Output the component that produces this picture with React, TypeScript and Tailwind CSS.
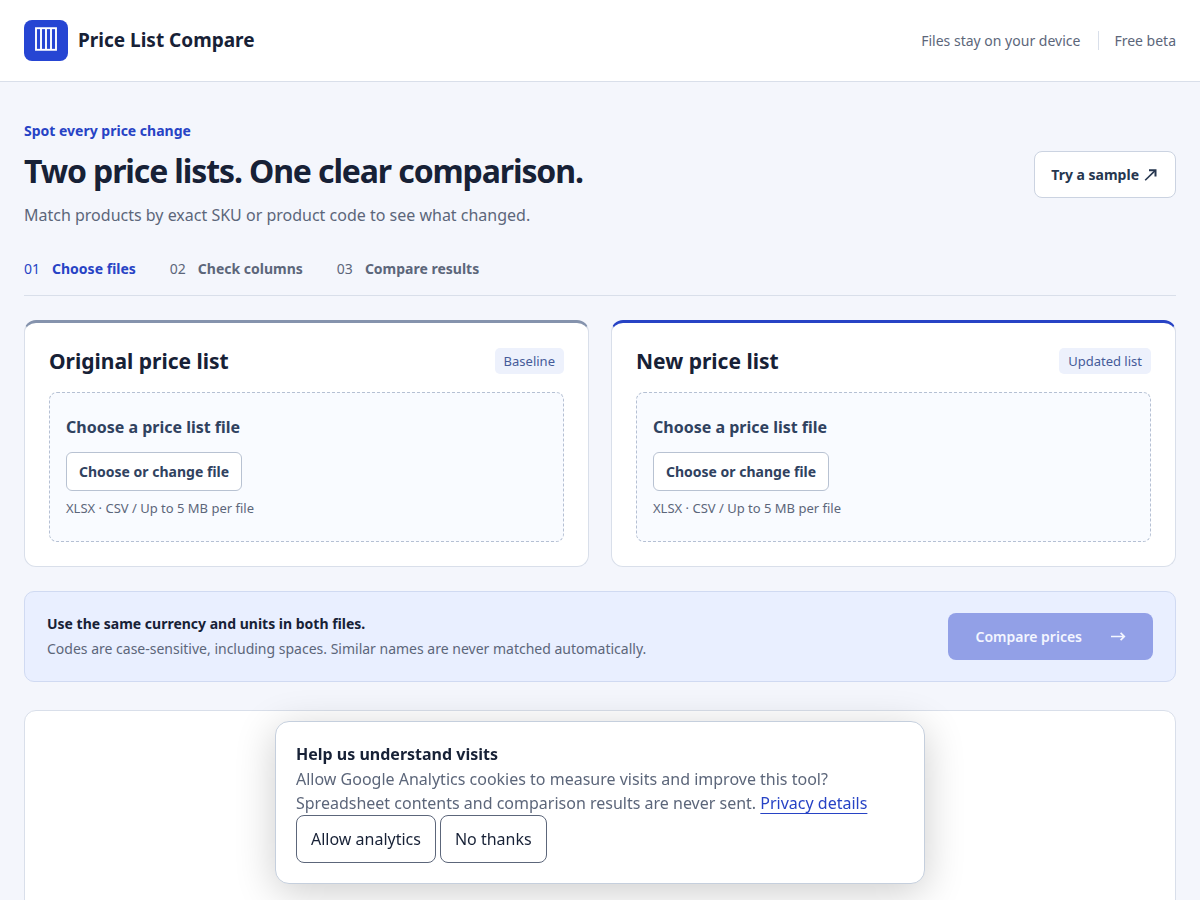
const steps = ["Choose files", "Check columns", "Compare results"];

const lists = [
  { id: "original", title: "Original price list", badge: "Baseline", accent: "border-t-[#8593ad]" },
  { id: "updated", title: "New price list", badge: "Updated list", accent: "border-t-[#2743c5]" },
];

function Logo() {
  return (
    <span className="flex h-[41px] w-11 items-center justify-center rounded-lg bg-[#2645d3]">
      <svg viewBox="0 0 22 24" className="mb-1 h-6 w-[22px]" fill="none" stroke="#fff" aria-hidden="true">
        <rect x="1" y="1.2" width="20" height="21.6" strokeWidth="1.9" />
        <path d="M6 1v22M11 1v22M16 1v22" strokeWidth="1.9" />
      </svg>
    </span>
  );
}

function Header() {
  return (
    <header className="flex items-center justify-between border-b border-[#d9dfea] bg-white px-6 py-5">
      <a href="#" className="flex items-center gap-2.5 text-[19px] font-bold">
        <Logo />
        Price List Compare
      </a>
      <div className="flex items-center text-sm leading-[19px] text-[#5c667a]">
        <span>Files stay on your device</span>
        <span className="ml-[18px] border-l border-[#d9dfea] pl-[15px]">Free beta</span>
      </div>
    </header>
  );
}

type PriceListCardProps = {
  id: string;
  title: string;
  badge: string;
  accent: string;
};

function PriceListCard({ id, title, badge, accent }: PriceListCardProps) {
  return (
    <section className={`rounded-xl border border-t-3 border-[#d9dfea] bg-white p-6 ${accent}`}>
      <div className="flex items-center justify-between">
        <h2 className="text-[21px] leading-7 font-bold">{title}</h2>
        <span className="rounded-[5px] bg-[#edf1fc] px-[9px] py-[3px] text-[13px] leading-5 text-[#455b99]">
          {badge}
        </span>
      </div>
      <div className="mt-[17px] rounded-lg border border-dashed border-[#b5c0d3] bg-[#f9fbff] px-4 pt-[22px] pb-[23px]">
        <h3 id={`${id}-label`} className="font-bold text-[#30425f]">
          Choose a price list file
        </h3>
        <button
          type="button"
          aria-describedby={`${id}-label`}
          className="mt-[13px] block h-[39px] rounded-md border border-[#b8c2d2] bg-white px-3 text-sm font-bold text-[#30425f]"
        >
          Choose or change file
        </button>
        <p className="mt-[7px] text-[13px] leading-5 text-[#5c667a]">XLSX · CSV / Up to 5 MB per file</p>
      </div>
    </section>
  );
}

function AnalyticsNotice() {
  return (
    <aside
      aria-labelledby="analytics-title"
      className="fixed inset-x-4 bottom-4 mx-auto max-w-[650px] rounded-[14px] border border-[#c5cfdd] bg-white p-5 shadow-[0_8px_40px_rgba(0,0,0,0.2)]"
    >
      <h2 id="analytics-title" className="leading-[25px] font-bold">
        Help us understand visits
      </h2>
      <p className="leading-6 text-[#5c667a]">
        Allow Google Analytics cookies to measure visits and improve this tool? Spreadsheet contents and
        comparison results are never sent.{" "}
        <a href="#" className="text-[#2743c5] underline underline-offset-4">
          Privacy details
        </a>
      </p>
      <div className="flex gap-1">
        <button type="button" className="h-12 rounded-lg border border-[#5c667a] bg-white px-3.5">
          Allow analytics
        </button>
        <button type="button" className="h-12 rounded-lg border border-[#5c667a] bg-white px-3.5">
          No thanks
        </button>
      </div>
    </aside>
  );
}

export default function App() {
  return (
    <div className="min-h-screen bg-[#f4f6fc] font-['Noto_Sans',sans-serif] text-[#172136]">
      <Header />

      <main className="px-6 pt-[38px]">
        <div className="flex items-center justify-between">
          <div>
            <p className="text-sm leading-[22px] font-bold text-[#2743c5]">Spot every price change</p>
            <h1 className="mt-2 text-[32px] leading-[42px] font-bold tracking-[-0.035em]">
              Two price lists. One clear comparison.
            </h1>
            <p className="mt-[9px] leading-7 text-[#5c667a]">
              Match products by exact SKU or product code to see what changed.
            </p>
          </div>
          <button
            type="button"
            className="flex h-[47px] items-center gap-1 rounded-lg border border-[#cbd3e1] bg-white px-4 text-sm font-bold text-[#26364f]"
          >
            Try a sample
            <svg viewBox="0 0 16 16" className="size-4" fill="none" stroke="currentColor" aria-hidden="true">
              <path d="M2.2 13.3 11.8 3.9" strokeWidth="1.6" />
              <path d="M6 3.3h6.5v6.3" strokeWidth="2" />
            </svg>
          </button>
        </div>

        <ol className="mt-[29px] flex gap-[34px] border-b border-[#d9dfea] pb-[15px] text-sm leading-[22px] text-[#5c667a]">
          {steps.map((step, i) => (
            <li key={step} className={i === 0 ? "flex gap-3 text-[#2743c5]" : "flex gap-3"}>
              <span>0{i + 1}</span>
              <strong>{step}</strong>
            </li>
          ))}
        </ol>

        <div className="mt-6 grid grid-cols-2 gap-[22px]">
          {lists.map((list) => (
            <PriceListCard key={list.id} {...list} />
          ))}
        </div>

        <section className="mt-6 flex items-center justify-between rounded-[10px] border border-[#d0daf2] bg-[#e9efff] px-[22px] py-[21px]">
          <div>
            <p className="text-sm leading-[22px] font-bold">Use the same currency and units in both files.</p>
            <p className="mt-[3px] text-sm leading-[22px] text-[#5c667a]">
              Codes are case-sensitive, including spaces. Similar names are never matched automatically.
            </p>
          </div>
          <button
            type="button"
            disabled
            className="flex h-[47px] items-center gap-7 rounded-lg bg-[#92a0e7] px-[27px] text-sm font-semibold text-[#f4f6ff]"
          >
            Compare prices
            <svg viewBox="0 0 16 16" className="size-4" fill="none" stroke="currentColor" strokeWidth="1.7" aria-hidden="true">
              <path d="M1 7.5h13.2M10.6 3.8l3.7 3.7-3.7 3.7" />
            </svg>
          </button>
        </section>

        <section className="mt-7 min-h-72 rounded-xl border border-[#d9dfea] bg-white" aria-label="Comparison results" />
      </main>

      <AnalyticsNotice />
    </div>
  );
}
